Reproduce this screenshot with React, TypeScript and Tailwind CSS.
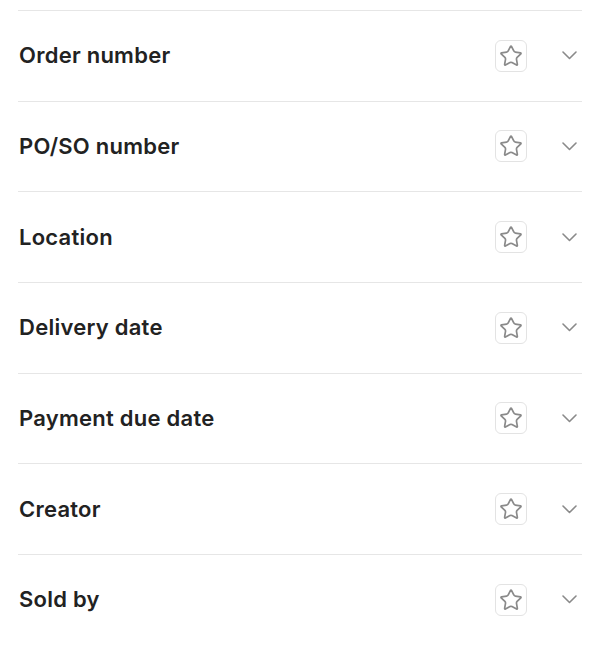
import React from "react";

const items = [
  "Order number",
  "PO/SO number",
  "Location",
  "Delivery date",
  "Payment due date",
  "Creator",
  "Sold by",
];

function StarIcon() {
  return (
    <svg width="24" height="24" viewBox="0 0 24 24" fill="none" stroke="#8a8a8a" strokeWidth="1.7" strokeLinecap="round" strokeLinejoin="round">
      <path d="M11.525 2.295a.53.53 0 0 1 .95 0l2.31 4.679a2.123 2.123 0 0 0 1.595 1.16l5.166.756a.53.53 0 0 1 .294.904l-3.736 3.638a2.123 2.123 0 0 0-.611 1.878l.882 5.14a.53.53 0 0 1-.771.56l-4.618-2.428a2.122 2.122 0 0 0-1.973 0L6.396 21.01a.53.53 0 0 1-.77-.56l.881-5.139a2.122 2.122 0 0 0-.611-1.879L2.16 9.795a.53.53 0 0 1 .294-.906l5.165-.755a2.122 2.122 0 0 0 1.597-1.16z" />
    </svg>
  );
}

function Chevron() {
  return (
    <svg width="15" height="9" viewBox="0 0 15 9" fill="none" stroke="#8a8a8a" strokeWidth="1.6" strokeLinecap="round" strokeLinejoin="round">
      <polyline points="1,1 7.5,7.5 14,1" />
    </svg>
  );
}

export default function App() {
  return (
    <div className="w-[602px] h-[652px] bg-white pt-[10px] pl-[18px] pr-[20px]" style={{ fontFamily: "Inter, 'Noto Sans', sans-serif" }}>
      {items.map((label) => (
        <div key={label} className="h-[90.67px] border-t border-[#e6e6e6] flex items-center">
          <div className="flex-1 pl-px text-[22px] font-semibold text-[#222222] tracking-[0.25px]">{label}</div>
          <button className="w-[32px] h-[32px] rounded-[6px] border border-[#e3e3e3] flex items-center justify-center">
            <StarIcon />
          </button>
          <div className="ml-[35px] mr-[5px] flex items-center">
            <Chevron />
          </div>
        </div>
      ))}
    </div>
  );
}
